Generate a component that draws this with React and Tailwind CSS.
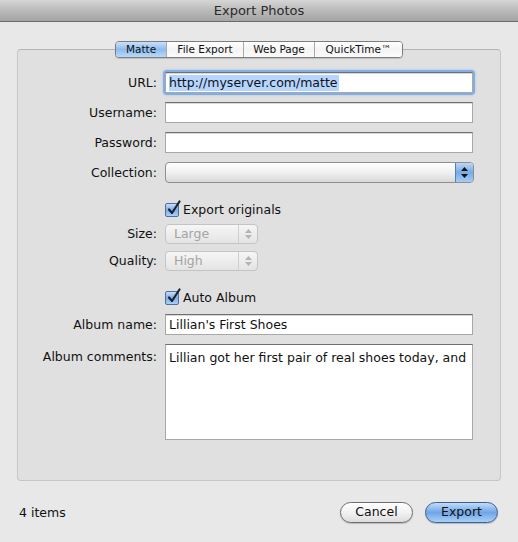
import React from "react";

const font = { fontFamily: '"DejaVu Sans", "Noto Sans", sans-serif' };

function Field({ children, className = "" }) {
  return (
    <div
      className={`h-[21px] w-[308px] bg-white border border-[#a8a8a8] border-t-[#707070] shadow-[inset_0_1px_0_#d8d8d8] flex items-center px-[3px] pt-[1px] ${className}`}
    >
      {children}
    </div>
  );
}

function Checkbox() {
  return (
    <div className="relative w-[14px] h-[14px] rounded-[2px] border border-[#4f6f9e] bg-gradient-to-b from-[#c6ddf7] via-[#7eaee6] to-[#a9d0f7]">
      <svg className="absolute -top-[4px] left-[1px]" width="15" height="17" viewBox="0 0 15 17">
        <path d="M2 9.5 L5 13 L12.5 1.5" fill="none" stroke="#1b2333" strokeWidth="2.2" strokeLinecap="round" strokeLinejoin="round" />
      </svg>
    </div>
  );
}

function SmallPopup({ value }) {
  return (
    <div className="h-[20px] w-[93px] rounded-[4px] border border-[#c4c4c4] bg-gradient-to-b from-[#f6f6f6] to-[#e4e4e4] flex items-center">
      <span className="flex-1 pl-[8px] pt-[1px] text-[#a4a4a4]">{value}</span>
      <div className="w-[19px] h-full border-l border-[#cfcfcf] flex flex-col items-center justify-center gap-[2px]">
        <svg width="7" height="4" viewBox="0 0 7 4"><path d="M3.5 0 L7 4 L0 4Z" fill="#b4b4b4" /></svg>
        <svg width="7" height="4" viewBox="0 0 7 4"><path d="M0 0 L7 0 L3.5 4Z" fill="#b4b4b4" /></svg>
      </div>
    </div>
  );
}

function Row({ label, children, className = "" }) {
  return (
    <div className={`flex items-center ${className}`}>
      <div className="w-[139px] text-right pt-[1px] text-[#111]">{label}</div>
      <div className="ml-[8px]">{children}</div>
    </div>
  );
}

export default function App() {
  const tabs = ["Matte", "File Export", "Web Page", "QuickTime™"];
  const widths = ["w-[50px]", "w-[77px]", "w-[71px]", "w-[88px]"];

  return (
    <div style={font} className="w-[518px] h-[542px] bg-[#e8e8e8] flex flex-col text-[12.5px] text-[#111] overflow-hidden">
      {/* Title bar */}
      <div className="h-[22px] shrink-0 bg-gradient-to-b from-[#d6d6d6] via-[#bababa] to-[#a4a4a4] border-b border-[#6b6b6b] flex items-center justify-center text-[13px] text-[#2a2a2a]">
        Export Photos
      </div>

      {/* Tabs */}
      <div className="mt-[19px] flex justify-center relative z-10">
        <div className="flex h-[17px] rounded-[4px] border border-[#7d7d7d] overflow-hidden shadow-[0_1px_1px_rgba(0,0,0,0.15)] text-[10.5px]">
          {tabs.map((t, i) => (
            <div
              key={t}
              className={`${widths[i]} flex items-center justify-center ${i > 0 ? "border-l border-[#a9a9a9]" : ""} ${
                i === 0
                  ? "bg-gradient-to-b from-[#c9e0f8] via-[#8ebbec] to-[#b9daf8]"
                  : "bg-gradient-to-b from-[#ffffff] via-[#f4f4f4] to-[#fbfbfb]"
              }`}
            >
              {t}
            </div>
          ))}
        </div>
      </div>

      {/* Group box */}
      <div className="-mt-[9px] mx-[17px] h-[432px] rounded-[4px] border border-[#c6c6c6] border-t-[#b4b4b4] bg-[#e0e0e0] pt-[22px] flex flex-col">
        <Row label="URL:">
          <div className="rounded-[2px] shadow-[0_0_0_2px_#82aee3,0_0_3px_2px_#9ec3ee]">
            <Field className="border-[#6f8fbf]">
              <span className="bg-[#b5d5ff] leading-[16px] pr-[1px]">http://myserver.com/matte</span>
            </Field>
          </div>
        </Row>
        <Row label="Username:" className="mt-[9px]">
          <Field />
        </Row>
        <Row label="Password:" className="mt-[9px]">
          <Field />
        </Row>
        <Row label="Collection:" className="mt-[9px]">
          <div className="h-[21px] w-[309px] rounded-[4px] border border-[#8f8f8f] bg-gradient-to-b from-[#ffffff] via-[#f0f0f0] to-[#d9d9d9] flex overflow-hidden">
            <div className="flex-1" />
            <div className="w-[18px] h-full border-l border-[#5b7fb3] bg-gradient-to-b from-[#bcd7f5] via-[#78aae5] to-[#a5cdf5] flex flex-col items-center justify-center gap-[3px]">
              <svg width="7" height="4" viewBox="0 0 7 4"><path d="M3.5 0 L7 4 L0 4Z" fill="#111" /></svg>
              <svg width="7" height="4" viewBox="0 0 7 4"><path d="M0 0 L7 0 L3.5 4Z" fill="#111" /></svg>
            </div>
          </div>
        </Row>

        <Row label="" className="mt-[19px] h-[16px]">
          <div className="flex items-center gap-[4px]">
            <Checkbox />
            <span className="pt-[1px]">Export originals</span>
          </div>
        </Row>
        <Row label="Size:" className="mt-[6px]">
          <SmallPopup value="Large" />
        </Row>
        <Row label="Quality:" className="mt-[7px]">
          <SmallPopup value="High" />
        </Row>

        <Row label="" className="mt-[19px] h-[16px]">
          <div className="flex items-center gap-[4px]">
            <Checkbox />
            <span className="pt-[1px]">Auto Album</span>
          </div>
        </Row>
        <Row label="Album name:" className="mt-[8px]">
          <Field>Lillian's First Shoes</Field>
        </Row>
        <div className="flex items-start mt-[9px]">
          <div className="w-[139px] text-right pt-[4px]">Album comments:</div>
          <div className="ml-[8px] h-[96px] w-[308px] bg-white border border-[#a8a8a8] border-t-[#707070] px-[3px] pt-[4px] whitespace-nowrap overflow-hidden">
            Lillian got her first pair of real shoes today, and
          </div>
        </div>
      </div>

      {/* Footer */}
      <div className="mt-[21px] mx-[19px] mr-[20px] flex items-center">
        <span className="flex-1 pt-[1px]">4 items</span>
        <button className="h-[21px] w-[73px] rounded-full border border-[#6e6e6e] bg-gradient-to-b from-[#ffffff] via-[#f2f2f2] to-[#dcdcdc] shadow-[0_1px_1px_rgba(0,0,0,0.2)]">
          Cancel
        </button>
        <button className="ml-[12px] h-[21px] w-[73px] rounded-full border border-[#3c5f95] bg-gradient-to-b from-[#c3dcf8] via-[#6ea6e6] to-[#a8d0f8] shadow-[0_1px_1px_rgba(0,0,0,0.2)]">
          Export
        </button>
      </div>
    </div>
  );
}
